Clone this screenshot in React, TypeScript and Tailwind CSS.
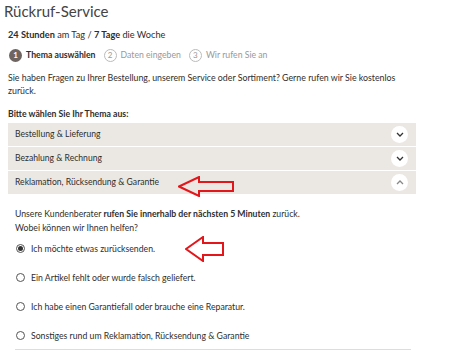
import React from 'react';

const ArrowLeft = ({ className, w, h, head, shaft }: { className: string; w: number; h: number; head: number; shaft: number }) => {
  const mid = h / 2;
  const pts = `1,${mid} ${head},1 ${head},${mid - shaft / 2} ${w - 1},${mid - shaft / 2} ${w - 1},${mid + shaft / 2} ${head},${mid + shaft / 2} ${head},${h - 1}`;
  return (
    <svg className={className} width={w} height={h} viewBox={`0 0 ${w} ${h}`} fill="none">
      <polygon points={pts} stroke="#e3161b" strokeWidth="2" />
    </svg>
  );
};

const Chevron = ({ up }: { up?: boolean }) => (
  <span className="flex h-[17px] w-[17px] items-center justify-center rounded-full bg-white">
    <svg width="8" height="5" viewBox="0 0 8 5" fill="none" className={up ? 'rotate-180' : ''}>
      <polyline points="1,1 4,4 7,1" stroke={up ? '#888' : '#333'} strokeWidth="1.3" />
    </svg>
  </span>
);

export default function App() {
  const topics = [
    { label: 'Bestellung & Lieferung' },
    { label: 'Bezahlung & Rechnung' },
    { label: 'Reklamation, Rücksendung & Garantie', open: true },
  ];
  const options = [
    'Ich möchte etwas zurücksenden.',
    'Ein Artikel fehlt oder wurde falsch geliefert.',
    'Ich habe einen Garantiefall oder brauche eine Reparatur.',
    'Sonstiges rund um Reklamation, Rücksendung & Garantie',
  ];

  return (
    <main className="relative h-[357px] w-[474px] overflow-hidden bg-white text-[#2e2e2e] font-['Lato',sans-serif]">
      <h1 className="pl-[4px] pt-[2px] text-[15px] leading-[18px] text-[#444]">Rückruf-Service</h1>

      <p className="mt-[9px] pl-[8px] text-[9.2px] leading-[12px]">
        <b>24 Stunden</b> am Tag / <b>7 Tage</b> die Woche
      </p>

      {/* Steps */}
      <div className="mt-[7px] flex items-center pl-[9px] text-[8.7px] leading-[14px]">
        <span className="flex h-[13px] w-[13px] items-center justify-center rounded-full bg-[#6e6462] text-[8px] font-bold text-white">1</span>
        <span className="ml-[4px] font-bold">Thema auswählen</span>
        <span className="ml-[8px] flex h-[13px] w-[13px] items-center justify-center rounded-full border border-[#bbb] text-[8px] text-[#999]">2</span>
        <span className="ml-[4px] text-[#999]">Daten eingeben</span>
        <span className="ml-[8px] flex h-[13px] w-[13px] items-center justify-center rounded-full border border-[#bbb] text-[8px] text-[#999]">3</span>
        <span className="ml-[4px] text-[#999]">Wir rufen Sie an</span>
      </div>

      <p className="mt-[9px] w-[410px] pl-[8px] text-[8.8px] leading-[13px]">
        Sie haben Fragen zu Ihrer Bestellung, unserem Service oder Sortiment? Gerne rufen wir Sie kostenlos zurück.
      </p>

      <p className="mt-[10px] pl-[8px] text-[8.7px] font-bold leading-[13px]">Bitte wählen Sie Ihr Thema aus:</p>

      {/* Accordion */}
      <div className="ml-[8px] mt-[3px] flex w-[408px] flex-col gap-[1px]">
        {topics.map((t) => (
          <div key={t.label} className="flex h-[23px] items-center justify-between bg-[#ebe8e3] pl-[7px] pr-[8px] text-[8.6px]">
            <span>{t.label}</span>
            <Chevron up={t.open} />
          </div>
        ))}
      </div>

      <div className="ml-[8px] w-[408px] pl-[7px]">
        <p className="mt-[13px] text-[8.7px] leading-[14px]">
          Unsere Kundenberater <b>rufen Sie innerhalb der nächsten 5 Minuten</b> zurück.
          <br />
          Wobei können wir Ihnen helfen?
        </p>
        <div className="-mt-[1px] flex flex-col">
          {options.map((o, i) => (
            <label key={o} className="flex h-[29px] items-center text-[8.7px]">
              <span className="ml-[1px] flex h-[9px] w-[9px] items-center justify-center rounded-full border border-[#555]">
                {i === 0 && <span className="h-[5px] w-[5px] rounded-full bg-[#333]" />}
              </span>
              <span className="ml-[6px]">{o}</span>
            </label>
          ))}
        </div>
        <div className="-mt-[1px] h-px w-[396px] bg-[#ddd]" />
      </div>

      <ArrowLeft className="absolute left-[178px] top-[176px]" w={56} h={21} head={21} shaft={9} />
      <ArrowLeft className="absolute left-[185px] top-[236px]" w={39} h={26} head={18} shaft={12} />
    </main>
  );
}
